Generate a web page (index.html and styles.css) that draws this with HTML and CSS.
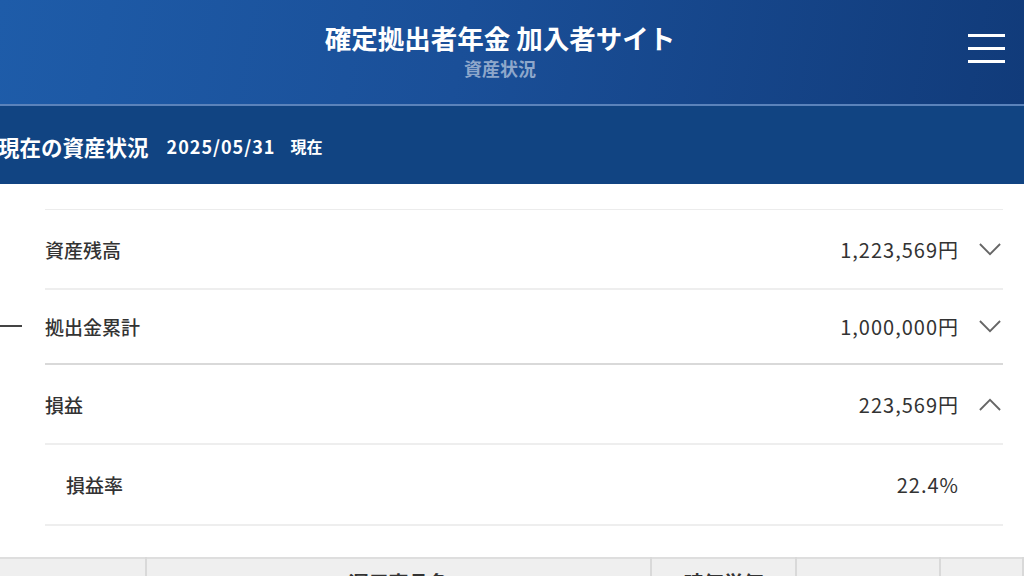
FILE: index.html
```html
<!DOCTYPE html>
<html lang="ja">
<head>
  <meta charset="UTF-8" />
  <title>資産状況 | 確定拠出者年金 加入者サイト</title>
  <link rel="stylesheet" href="styles.css">
</head>
<body>

  <header class="topbar">
    <div class="topbar-title">
      <h1>確定拠出者年金 加入者サイト</h1>
      <p>資産状況</p>
    </div>
    <div class="menu-btn" aria-label="メニュー">
      <span></span><span></span><span></span>
    </div>
  </header>

  <div class="status-band">
    <h2>現在の資産状況</h2>
    <span class="date">2025/05/31</span>
    <span class="now">現在</span>
  </div>

  <div class="summary">
    <span class="side-dash"></span>
    <ul class="asset-list">
      <li class="row">
        <span class="label">資産残高</span>
        <span class="value">1,223,569円</span>
        <svg class="chev" viewBox="0 0 24 14"><path d="M1 1 L12 12 L23 1" /></svg>
      </li>
      <li class="row">
        <span class="label">拠出金累計</span>
        <span class="value">1,000,000円</span>
        <svg class="chev" viewBox="0 0 24 14"><path d="M1 1 L12 12 L23 1" /></svg>
      </li>
      <li class="row open">
        <span class="label">損益</span>
        <span class="value">223,569円</span>
        <svg class="chev" viewBox="0 0 24 14"><path d="M1 13 L12 2 L23 13" /></svg>
      </li>
      <li class="row sub">
        <span class="label">損益率</span>
        <span class="value">22.4%</span>
        <span class="chev-space"></span>
      </li>
    </ul>
  </div>

  <table class="holdings">
    <thead>
      <tr>
        <th class="c1"></th>
        <th class="c2">運用商品名</th>
        <th class="c3">時価単価</th>
        <th class="c4"></th>
        <th class="c5"></th>
      </tr>
    </thead>
  </table>

</body>
</html>
```

FILE: styles.css
```css
body {
  margin: 0;
  font-family: "Noto Sans CJK JP", "Noto Sans", sans-serif;
  background: #fff;
  color: #333;
  overflow: hidden;
}

.topbar {
  height: 104px;
  background: linear-gradient(100deg, #1e5ca9 0%, #1a4f98 45%, #113b7a 100%);
  border-bottom: 2px solid #5b83bb;
  display: flex;
  align-items: flex-start;
  justify-content: center;
  padding-right: 24px;
  position: relative;
}

.topbar-title {
  text-align: center;
  padding-top: 19px;
}
.topbar-title h1 {
  margin: 0;
  font-size: 26.5px;
  line-height: 38px;
  font-weight: 700;
  color: #fff;
}
.topbar-title p {
  margin: 0;
  font-size: 18px;
  line-height: 22px;
  font-weight: 700;
  color: #8ea7cb;
}

.menu-btn {
  position: absolute;
  right: 19px;
  top: 34px;
  width: 37px;
  display: flex;
  flex-direction: column;
  gap: 10px;
}
.menu-btn span {
  display: block;
  height: 3px;
  background: #fff;
}

.status-band {
  height: 78px;
  background: #114482;
  color: #fff;
  display: flex;
  align-items: center;
  padding-top: 2px;
  box-sizing: border-box;
}
.status-band h2 {
  margin: 0 0 0 -2px;
  font-size: 21.5px;
  font-weight: 700;
}
.status-band .date {
  margin-left: 18px;
  font-size: 18px;
  font-weight: 700;
  letter-spacing: 1px;
}
.status-band .now {
  margin-left: 15px;
  font-size: 16px;
  font-weight: 700;
}

.summary {
  padding: 25px 21px 0 45px;
  position: relative;
}
.side-dash {
  position: absolute;
  left: 0;
  top: 141px;
  width: 22px;
  height: 2px;
  background: #444;
}

.asset-list {
  list-style: none;
  margin: 0;
  padding: 0;
  border-top: 1px solid #ececec;
}
.row {
  display: flex;
  align-items: center;
  box-sizing: border-box;
  height: 80px;
  border-bottom: 2px solid #eeeeee;
}
.row:nth-child(2) {
  height: 75px;
  border-bottom-color: #d9d9d9;
}
.row.sub { height: 81px; }

.label {
  flex: 1;
  font-size: 19px;
  font-weight: 500;
  color: #333;
}
.row.sub .label { padding-left: 21px; }

.value {
  font-size: 20px;
  color: #333;
  letter-spacing: 1px;
}

.chev, .chev-space {
  width: 22px;
  height: 13px;
  margin-left: 20px;
  margin-right: 2px;
}
.chev path {
  fill: none;
  stroke: #666;
  stroke-width: 2;
}

.holdings {
  margin-top: 31px;
  width: 1024px;
  border-collapse: collapse;
  table-layout: fixed;
}
.holdings th {
  height: 40px;
  background: #efefef;
  border-top: 2px solid #dedede;
  border-right: 2px solid #d9d9d9;
  font-size: 20px;
  font-weight: 700;
  color: #333;
  vertical-align: top;
  padding: 9px 0 0;
}
.holdings .c1 { width: 145px; }
.holdings .c2 { width: 503px; }
.holdings .c3 { width: 143px; }
.holdings .c4 { width: 142px; }
```
